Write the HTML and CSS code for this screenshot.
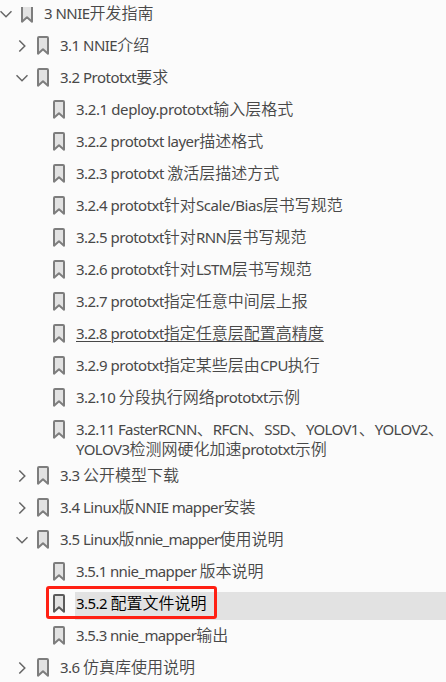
FILE: index.html
```
<!DOCTYPE html>
<html lang="zh-CN">
<head>
<meta charset="utf-8">
<title>NNIE开发指南</title>
<link rel="stylesheet" href="styles.css">
</head>
<body>
<svg class="defs" aria-hidden="true">
<symbol id="mark" viewBox="0 0 12 19"><path d="M1 17V2Q1 1 2 1H10Q11 1 11 2V17L6 12.5Z" fill="#e2e2e2"/><path d="M1 17.7V2Q1 1 2 1H10Q11 1 11 2V17.7L6 13.2Z" fill="none" stroke="currentColor" stroke-width="2" stroke-linejoin="round"/></symbol>
<symbol id="down" viewBox="0 0 12 12"><path d="M.5 3.3L6 8.8L11.5 3.3" fill="none" stroke="currentColor" stroke-width="1.5"/></symbol>
<symbol id="right" viewBox="0 0 12 12"><path d="M3.3 .5L8.8 6L3.3 11.5" fill="none" stroke="currentColor" stroke-width="1.5"/></symbol>
</svg>
<main class="tree">
<div class="row root"><svg class="arrow"><use href="#down"/></svg><svg class="mark"><use href="#mark"/></svg><p><b>3 NNIE</b>开发指南</p></div>
<div class="row l1"><svg class="arrow"><use href="#right"/></svg><svg class="mark"><use href="#mark"/></svg><p><b>3.1 NNIE</b>介绍</p></div>
<div class="row l1"><svg class="arrow"><use href="#down"/></svg><svg class="mark"><use href="#mark"/></svg><p><b>3.2 Prototxt</b>要求</p></div>
<div class="row l2"><svg class="mark"><use href="#mark"/></svg><p><b class="loose">3.2.1 deploy.prototxt</b>输入层格式</p></div>
<div class="row l2"><svg class="mark"><use href="#mark"/></svg><p><b>3.2.2 prototxt layer</b>描述格式</p></div>
<div class="row l2"><svg class="mark"><use href="#mark"/></svg><p><b>3.2.3 prototxt </b>激活层描述方式</p></div>
<div class="row l2"><svg class="mark"><use href="#mark"/></svg><p><b>3.2.4 prototxt</b>针对<b class="loose">Scale/Bias</b>层书写规范</p></div>
<div class="row l2"><svg class="mark"><use href="#mark"/></svg><p><b>3.2.5 prototxt</b>针对<b>RNN</b>层书写规范</p></div>
<div class="row l2"><svg class="mark"><use href="#mark"/></svg><p><b>3.2.6 prototxt</b>针对<b>LSTM</b>层书写规范</p></div>
<div class="row l2"><svg class="mark"><use href="#mark"/></svg><p><b>3.2.7 prototxt</b>指定任意中间层上报</p></div>
<div class="row l2 hover"><svg class="mark"><use href="#mark"/></svg><p><b>3.2.8 prototxt</b>指定任意层配置高精度</p></div>
<div class="row l2"><svg class="mark"><use href="#mark"/></svg><p><b>3.2.9 prototxt</b>指定某些层由<b>CPU</b>执行</p></div>
<div class="row l2"><svg class="mark"><use href="#mark"/></svg><p><b>3.2.10 </b>分段执行网络<b>prototxt</b>示例</p></div>
<div class="row l2 double"><svg class="mark"><use href="#mark"/></svg><p><b class="tight">3.2.11 FasterRCNN</b>、<b class="tight">RFCN</b>、<b class="tight">SSD</b>、<b class="tight">YOLOV1</b>、<b class="tight">YOLOV2</b>、<br><b>YOLOV3</b>检测网硬化加速<b>prototxt</b>示例</p></div>
<div class="row l1"><svg class="arrow"><use href="#right"/></svg><svg class="mark"><use href="#mark"/></svg><p><b>3.3 </b>公开模型下载</p></div>
<div class="row l1"><svg class="arrow"><use href="#right"/></svg><svg class="mark"><use href="#mark"/></svg><p><b>3.4 Linux</b>版<b class="tight">NNIE mapper</b>安装</p></div>
<div class="row l1"><svg class="arrow"><use href="#down"/></svg><svg class="mark"><use href="#mark"/></svg><p><b>3.5 Linux</b>版<b class="tighter">nnie_mapper</b>使用说明</p></div>
<div class="row l2"><svg class="mark"><use href="#mark"/></svg><p><b class="tight">3.5.1 nnie_mapper </b>版本说明</p></div>
<div class="row l2 selected"><svg class="mark"><use href="#mark"/></svg><p><b>3.5.2 </b>配置文件说明</p><span class="callout"></span></div>
<div class="row l2"><svg class="mark"><use href="#mark"/></svg><p><b class="tight">3.5.3 nnie_mapper</b>输出</p></div>
<div class="row l1"><svg class="arrow"><use href="#right"/></svg><svg class="mark"><use href="#mark"/></svg><p><b>3.6 </b>仿真库使用说明</p></div>
</main>
</body>
</html>
```
FILE: styles.css
```
* { box-sizing: border-box; }
body {
  margin: 0;
  height: 682px;
  overflow: hidden;
  background: #fbfbfb;
  color: #484848;
  font: 16px/20px "Noto Sans CJK SC", sans-serif;
}
.defs { display: block; width: 0; height: 0; }
.tree { margin-top: -2px; }
.row { display: flex; align-items: flex-start; height: 32px; position: relative; }
.l1 { padding-left: 16px; }
.l2 { padding-left: 53px; }
.arrow { flex: none; width: 12px; height: 12px; margin: 10px 9px 0 0; color: #666; }
.mark { flex: none; width: 12px; height: 19px; margin-top: 6px; color: #7d7d7d; }
.root .mark { clip-path: inset(3px 0 0 0); }
p {
  flex: 1;
  height: 28px;
  margin: 4px 0 0 10px;
  padding: 0 0 0 1px;
  white-space: nowrap;
  font-weight: 350;
}
b {
  font-family: "Noto Sans", sans-serif;
  font-size: 15px;
  font-weight: 400;
  letter-spacing: -0.52px;
  line-height: 1;
  white-space: pre;
}
.loose { letter-spacing: -0.4px; }
.tight { letter-spacing: -0.62px; }
.tighter { letter-spacing: -0.75px; }
.hover p { text-decoration: underline; text-underline-offset: 2px; text-decoration-thickness: 1px; }
.double { height: 46px; }
.double p { height: 42px; }
.selected { color: #000; }
.selected p { background: #e2e2e2; }
.selected .mark { color: #5b5b5b; }
.callout {
  position: absolute;
  left: 46px;
  top: -2px;
  width: 171px;
  height: 33px;
  border: 3px solid #ff2013;
  border-radius: 3px;
}
```
